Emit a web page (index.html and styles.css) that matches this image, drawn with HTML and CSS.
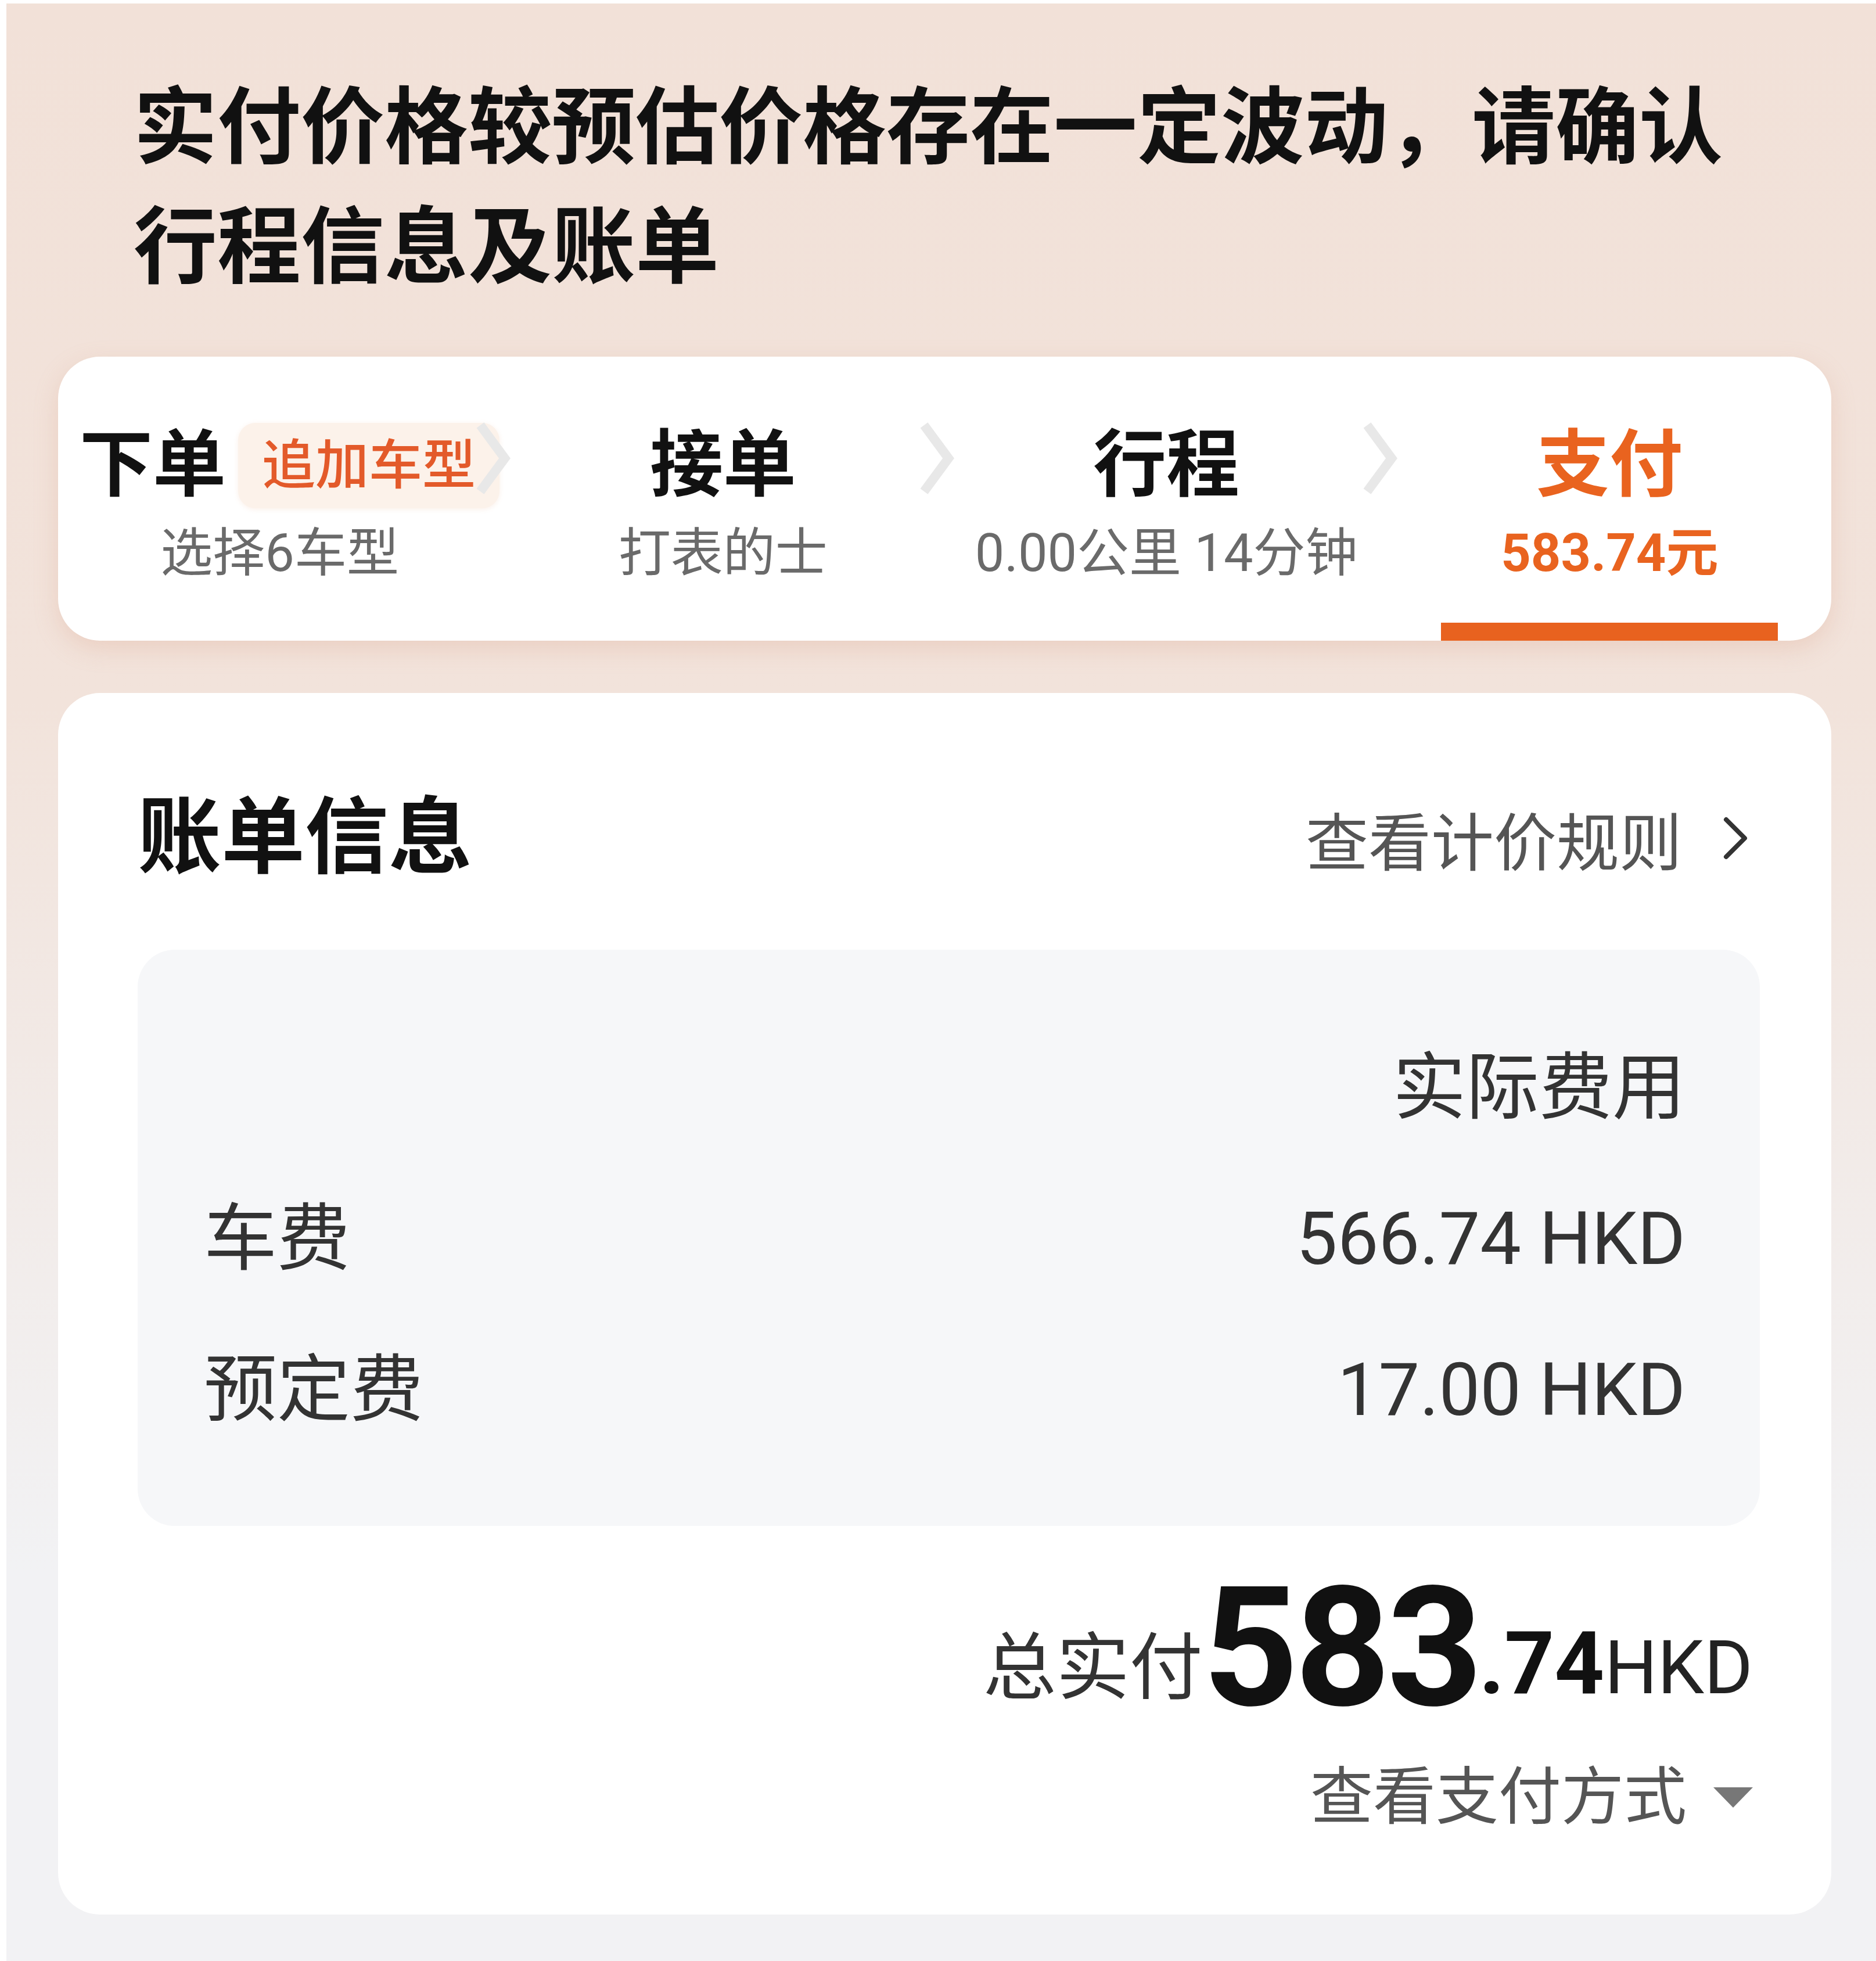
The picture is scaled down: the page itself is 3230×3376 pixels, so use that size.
FILE: index.html
```html
<!DOCTYPE html>
<html lang="zh-CN">
<head>
  <meta charset="UTF-8" />
  <meta name="viewport" content="width=device-width, initial-scale=1.0"/>
  <title>账单信息</title>
  <link rel="stylesheet" href="styles.css">
</head>
<body>
  <div class="page">

    <!-- 顶部提示 -->
    <h1 class="headline">实付价格较预估价格存在一定波动，请确认行程信息及账单</h1>

    <!-- 订单进度 -->
    <div class="steps">
      <div class="step first">
        <div class="step-title">
          <span>下单</span>
          <span class="badge">追加车型</span>
        </div>
        <div class="step-sub">选择6车型</div>
        <svg class="step-arrow" viewBox="0 0 64 126" width="64" height="126">
          <polyline points="10,6 52,63 10,120" />
        </svg>
      </div>
      <div class="step">
        <div class="step-title">接单</div>
        <div class="step-sub">打表的士</div>
        <svg class="step-arrow" viewBox="0 0 64 126" width="64" height="126">
          <polyline points="10,6 52,63 10,120" />
        </svg>
      </div>
      <div class="step">
        <div class="step-title">行程</div>
        <div class="step-sub">0.00公里 14分钟</div>
        <svg class="step-arrow" viewBox="0 0 64 126" width="64" height="126">
          <polyline points="10,6 52,63 10,120" />
        </svg>
      </div>
      <div class="step active">
        <div class="step-title">支付</div>
        <div class="step-sub">583.74元</div>
        <div class="step-bar"></div>
      </div>
    </div>

    <!-- 账单 -->
    <div class="bill">
      <div class="bill-head">
        <h2>账单信息</h2>
        <div class="rule-link">
          <span>查看计价规则</span>
          <svg viewBox="0 0 44 76" width="44" height="76">
            <polyline points="6,6 38,38 6,70" />
          </svg>
        </div>
      </div>

      <div class="bill-box">
        <div class="bill-row head"><span>实际费用</span></div>
        <div class="bill-row">
          <span>车费</span>
          <span class="amount">566.74 HKD</span>
        </div>
        <div class="bill-row">
          <span>预定费</span>
          <span class="amount">17.00 HKD</span>
        </div>
      </div>

      <div class="total">
        <span class="total-label">总实付</span><span class="total-int">583</span><span class="total-dec">.74</span><span class="total-cur">HKD</span>
      </div>

      <div class="pay-link">
        <span>查看支付方式</span>
        <svg viewBox="0 0 68 35" width="68" height="35">
          <polygon points="0,0 68,0 34,35" />
        </svg>
      </div>
    </div>

  </div>
</body>
</html>
```

FILE: styles.css
```css
html {
  background: #fff;
}

body {
  margin: 0;
  font-family: Roboto, "Noto Sans CJK SC", sans-serif;
  color: #111;
}

.page {
  margin: 6px 0 0 11px;
  padding: 0 77px 83px 89px;
  min-height: 3370px;
  box-sizing: border-box;
  background: linear-gradient(180deg, #f2e1d8 0, #f2e3db 1200px, #f2f2f4 2700px, #f2f2f4 100%);
}

.headline {
  margin: 0;
  padding: 112px 150px 0 130px;
  font-size: 144px;
  line-height: 206px;
  font-weight: 700;
  color: #111;
}

/* 订单进度卡片 */
.steps {
  margin-top: 84px;
  height: 489px;
  background: #fff;
  border-radius: 72px;
  display: grid;
  grid-template-columns: repeat(4, 1fr);
  box-shadow: 0 14px 40px rgba(214, 150, 125, 0.25);
  overflow: hidden;
}

.step {
  position: relative;
  display: flex;
  flex-direction: column;
  align-items: center;
  padding-top: 112px;
}

.step-title {
  display: flex;
  align-items: center;
  gap: 21px;
  height: 150px;
  font-size: 126px;
  line-height: 150px;
  font-weight: 700;
  color: #111;
  white-space: nowrap;
}

.step.first .step-title {
  margin-left: 34px;
}

.badge {
  position: relative;
  z-index: 1;
  height: 147px;
  padding: 0 41px;
  border-radius: 30px;
  background: #fcf2ea;
  box-shadow: 0 2px 8px rgba(230, 160, 120, 0.16);
  color: #e35a2a;
  font-size: 92px;
  line-height: 147px;
  font-weight: 500;
}

.step-sub {
  margin-top: 22px;
  font-size: 90px;
  line-height: 110px;
  color: #6a6a6a;
  white-space: nowrap;
}

.step-arrow {
  position: absolute;
  right: -18px;
  top: 112px;
  z-index: 2;
}

.step-arrow polyline {
  fill: none;
  stroke: #e8e8e8;
  stroke-width: 16;
}

.step.active .step-title,
.step.active .step-sub {
  color: #e9631f;
  font-weight: 700;
}

.step-bar {
  margin-top: auto;
  width: 580px;
  height: 31px;
  background: #e8621f;
}

/* 账单卡片 */
.bill {
  margin-top: 90px;
  background: #fff;
  border-radius: 72px;
  padding: 150px 123px 137px 137px;
}

.bill-head {
  display: flex;
  justify-content: space-between;
  align-items: center;
  height: 200px;
  padding-right: 20px;
}

.bill-head h2 {
  margin: 0;
  font-size: 144px;
  line-height: 200px;
  font-weight: 700;
  color: #111;
}

.rule-link {
  display: flex;
  align-items: center;
  gap: 70px;
  font-size: 108px;
  color: #555;
}

.rule-link polyline {
  fill: none;
  stroke: #333;
  stroke-width: 8;
  stroke-linecap: round;
  stroke-linejoin: round;
}

.bill-box {
  margin-top: 92px;
  background: #f6f7f9;
  border-radius: 64px;
  padding: 108px 128px 104px 114px;
}

.bill-row {
  display: flex;
  justify-content: space-between;
  height: 260px;
  font-size: 126px;
  line-height: 260px;
  color: #333;
}

.bill-row.head {
  justify-content: flex-end;
}

.total {
  margin-top: 67px;
  padding-right: 12px;
  text-align: right;
  font-size: 126px;
  line-height: 1;
  color: #222;
  white-space: nowrap;
}

.total-label {
  font-size: 126px;
  color: #333;
}

.total-int {
  font-size: 287px;
  font-weight: 700;
  letter-spacing: -6px;
  color: #111;
  vertical-align: -20px;
}

.total-dec {
  font-size: 150px;
  font-weight: 700;
  color: #111;
}

.total-cur {
  font-size: 128px;
  color: #222;
}

.pay-link {
  margin-top: 48px;
  display: flex;
  justify-content: flex-end;
  align-items: center;
  gap: 46px;
  padding-right: 12px;
  font-size: 108px;
  line-height: 130px;
  color: #555;
}

.pay-link polygon {
  fill: #777;
}
```
